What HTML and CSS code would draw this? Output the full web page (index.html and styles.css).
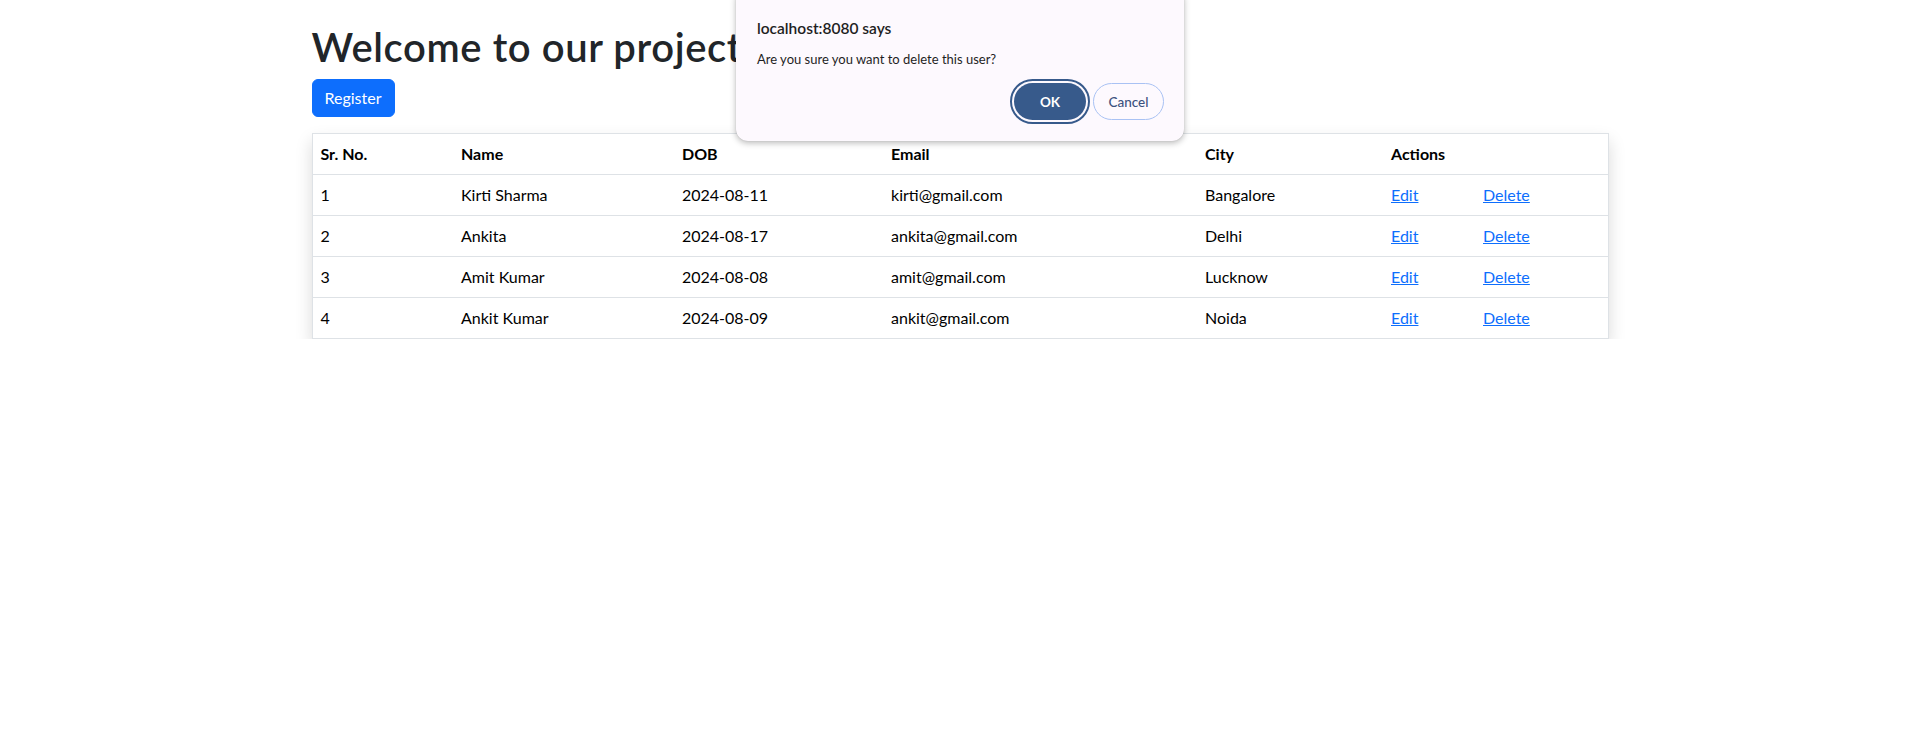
FILE: index.html
```html
<!DOCTYPE html>
<html lang="en">
<head>
<meta charset="utf-8">
<title>Users</title>
<link rel="stylesheet" href="styles.css">
</head>
<body>
<div class="container">
  <h1 class="title">Welcome to our project</h1>
  <button class="btn-primary" type="button">Register</button>
  <table class="users">
    <colgroup>
      <col class="c1"><col class="c2"><col class="c3"><col class="c4"><col class="c5"><col class="c6"><col class="c7">
    </colgroup>
    <thead>
      <tr><th>Sr. No.</th><th>Name</th><th>DOB</th><th>Email</th><th>City</th><th colspan="2">Actions</th></tr>
    </thead>
    <tbody>
      <tr><td>1</td><td>Kirti Sharma</td><td>2024-08-11</td><td>kirti@gmail.com</td><td>Bangalore</td><td><a href="#">Edit</a></td><td><a href="#">Delete</a></td></tr>
      <tr><td>2</td><td>Ankita</td><td>2024-08-17</td><td>ankita@gmail.com</td><td>Delhi</td><td><a href="#">Edit</a></td><td><a href="#">Delete</a></td></tr>
      <tr><td>3</td><td>Amit Kumar</td><td>2024-08-08</td><td>amit@gmail.com</td><td>Lucknow</td><td><a href="#">Edit</a></td><td><a href="#">Delete</a></td></tr>
      <tr><td>4</td><td>Ankit Kumar</td><td>2024-08-09</td><td>ankit@gmail.com</td><td>Noida</td><td><a href="#">Edit</a></td><td><a href="#">Delete</a></td></tr>
    </tbody>
  </table>
</div>

<div class="dialog" role="alertdialog">
  <div class="dialog-title">localhost:8080 says</div>
  <div class="dialog-msg">Are you sure you want to delete this user?</div>
  <div class="dialog-actions">
    <button class="dlg-btn ok" type="button">OK</button>
    <button class="dlg-btn cancel" type="button">Cancel</button>
  </div>
</div>
</body>
</html>
```
FILE: styles.css
```css
* { box-sizing: border-box; }
body {
  margin: 0;
  font-family: "Lato", "Liberation Sans", sans-serif;
  font-size: 16px;
  line-height: 1.5;
  color: #212529;
  background: #fff;
}
.container {
  max-width: 1320px;
  margin: 0 auto;
  padding: 23px 12px 0;
}
.title {
  margin: 0 0 8px;
  font-size: 40px;
  font-weight: 600;
  line-height: 1.2;
  letter-spacing: 0.6px;
  color: #212529;
}
.btn-primary {
  display: inline-block;
  font-family: inherit;
  font-size: 16px;
  line-height: 1.5;
  padding: 6px 12px;
  color: #fff;
  background: #0d6efd;
  border: 1px solid #0d6efd;
  border-radius: 6px;
}
.users {
  width: 100%;
  margin-top: 16px;
  border-collapse: collapse;
  table-layout: fixed;
  border: 1px solid #dee2e6;
  box-shadow: 0 8px 16px rgba(0,0,0,.15);
  color: #000;
}
.c1 { width: 141px; }
.c2 { width: 221px; }
.c3 { width: 209px; }
.c4 { width: 314px; }
.c5 { width: 186px; }
.c6 { width: 92px; }
.c7 { width: 133px; }
.users th, .users td {
  padding: 8px;
  text-align: left;
  border-bottom: 1px solid #dee2e6;
  vertical-align: top;
}
.users th { font-weight: 700; }
.users a { color: #0d6efd; text-decoration: underline; }

.dialog {
  position: absolute;
  left: 736px;
  top: -12px;
  width: 448px;
  height: 153px;
  background: #fdf9fe;
  border-radius: 12px;
  box-shadow: 0 2px 6px rgba(0,0,0,.28), 0 0 1px rgba(0,0,0,.2);
  padding: 30px 20px 0 21px;
  color: #1f1f1f;
}
.dialog-title {
  font-size: 15.5px;
  font-weight: 600;
  line-height: 20px;
}
.dialog-msg {
  font-size: 13px;
  line-height: 18px;
  margin-top: 12px;
}
.dialog-actions {
  display: flex;
  justify-content: flex-end;
  gap: 7px;
  margin-top: 15px;
}
.dlg-btn {
  font-family: inherit;
  height: 37px;
  border-radius: 19px;
  font-size: 13.5px;
  cursor: pointer;
}
.ok {
  width: 72px;
  background: #375a8b;
  color: #fff;
  border: none;
  font-weight: 700;
  outline: 2px solid #375a8b;
  outline-offset: 2px;
}
.cancel {
  width: 71px;
  background: #fdf9fe;
  color: #3c5280;
  border: 1px solid #a9c2f4;
  font-weight: 500;
}
```
